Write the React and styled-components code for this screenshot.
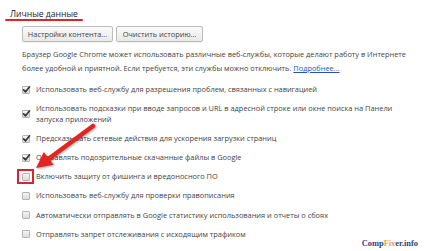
import React from "react";
import styled, { createGlobalStyle } from "styled-components";

const GlobalStyle = createGlobalStyle`
  html, body {
    margin: 0;
    padding: 0;
    background: #fff;
  }
  body {
    font-family: "Open Sans", "Noto Sans", sans-serif;
    color: #444;
    -webkit-font-smoothing: antialiased;
  }
`;

const Page = styled.div`
  position: relative;
  width: 424px;
  height: 251px;
  overflow: hidden;
  background: #fff;
`;

const Section = styled.section`
  display: flex;
  flex-direction: column;
  padding: 8px 14px 0 10px;
`;

const Title = styled.h2`
  position: relative;
  margin: 0;
  font-size: 8.6px;
  line-height: 12px;
  font-weight: 400;
  color: #222;

  &::after {
    content: "";
    position: absolute;
    left: -5px;
    width: 78px;
    top: 11px;
    height: 2px;
    background: #d8262a;
    border-radius: 1px;
  }
`;

const Body = styled.div`
  display: flex;
  flex-direction: column;
  padding-left: 12px;
`;

const ButtonRow = styled.div`
  display: flex;
  gap: 3px;
  margin-top: 6px;
`;

const Button = styled.button`
  width: ${(p) => p.$width}px;
  height: 16px;
  padding: 0;
  font-family: inherit;
  font-size: 7.4px;
  color: #444;
  background: linear-gradient(#fbfbfb, #e8e8e8);
  border: 1px solid #bcbcbc;
  border-radius: 2px;
  box-shadow: 0 1px 0 rgba(0, 0, 0, 0.06);
`;

const Description = styled.p`
  margin: 5px 0 0;
  font-size: 7.4px;
  line-height: 14px;
  color: #444;
`;

const Link = styled.a`
  color: #2255b8;
  text-decoration: underline;
`;

const OptionList = styled.div`
  display: flex;
  flex-direction: column;
  gap: 8.1px;
  margin-top: 9px;
`;

const Option = styled.label`
  display: flex;
  align-items: center;
  gap: 6px;
  font-size: 7.4px;
  line-height: 11px;
  color: #444;
`;

const Box = styled.span`
  position: relative;
  flex: 0 0 auto;
  width: 8px;
  height: 8px;
  box-sizing: border-box;
  border: 1px solid #b4b4b4;
  border-radius: 1px;
  background: linear-gradient(#f4f4f4, #dcdcdc);

  ${(p) =>
    p.$highlighted &&
    `
    &::after {
      content: "";
      position: absolute;
      left: -6px;
      top: -5px;
      width: 17px;
      height: 15px;
      box-sizing: border-box;
      border: 2px solid #d4262c;
    }
  `}
`;

const CheckMark = styled.svg`
  position: absolute;
  left: -1px;
  top: -2px;
  width: 9px;
  height: 9px;
`;

const Watermark = styled.div`
  position: absolute;
  right: 6px;
  bottom: 3px;
  font-family: "Liberation Serif", "DejaVu Serif", serif;
  font-weight: 700;
  font-size: 8.4px;
  color: #2b3f7c;
`;

const Accent = styled.span`
  color: #f0a23a;
`;

const Arrow = styled.svg`
  position: absolute;
  left: 30px;
  top: 120px;
  width: 70px;
  height: 55px;
  overflow: visible;
  filter: drop-shadow(1px 1px 1px rgba(0, 0, 0, 0.35));
`;

const Checkbox = ({ checked, highlighted }) => (
  <Box $highlighted={highlighted}>
    {checked && (
      <CheckMark viewBox="0 0 10 10">
        <path
          d="M1.8 5.4 L4 7.6 L8.4 2"
          fill="none"
          stroke="#333"
          strokeWidth="1.8"
          strokeLinecap="round"
          strokeLinejoin="round"
        />
      </CheckMark>
    )}
  </Box>
);

const options = [
  { text: "Использовать веб-службу для разрешения проблем, связанных с навигацией", checked: true },
  {
    text: "Использовать подсказки при вводе запросов и URL в адресной строке или окне поиска на Панели запуска приложений",
    checked: true,
  },
  { text: "Предсказывать сетевые действия для ускорения загрузки страниц", checked: true },
  { text: "Отправлять подозрительные скачанные файлы в Google", checked: true },
  { text: "Включить защиту от фишинга и вредоносного ПО", checked: false, highlighted: true },
  { text: "Использовать веб-службу для проверки правописания", checked: false },
  { text: "Автоматически отправлять в Google статистику использования и отчеты о сбоях", checked: false },
  { text: "Отправлять запрет отслеживания с исходящим трафиком", checked: false },
];

export default function App() {
  return (
    <Page>
      <GlobalStyle />
      <Section>
        <Title>Личные данные</Title>
        <Body>
          <ButtonRow>
            <Button $width={91}>Настройки контента...</Button>
            <Button $width={87}>Очистить историю...</Button>
          </ButtonRow>
          <Description>
            Браузер Google Chrome может использовать различные веб-службы, которые делают работу в
            Интернете более удобной и приятной. Если требуется, эти службы можно отключить.{" "}
            <Link href="#">Подробнее...</Link>
          </Description>
          <OptionList>
            {options.map((o) => (
              <Option key={o.text}>
                <Checkbox checked={o.checked} highlighted={o.highlighted} />
                <span>{o.text}</span>
              </Option>
            ))}
          </OptionList>
        </Body>
      </Section>

      {/* annotation arrow */}
      <Arrow viewBox="30 120 70 55">
        <line x1="93" y1="126" x2="47" y2="160" stroke="#e32522" strokeWidth="4.5" strokeLinecap="round" />
        <polygon points="36,168 53.6,164.7 43.8,151.9" fill="#e32522" />
      </Arrow>

      <Watermark>
        Comp<Accent>Fix</Accent>er.info
      </Watermark>
    </Page>
  );
}
